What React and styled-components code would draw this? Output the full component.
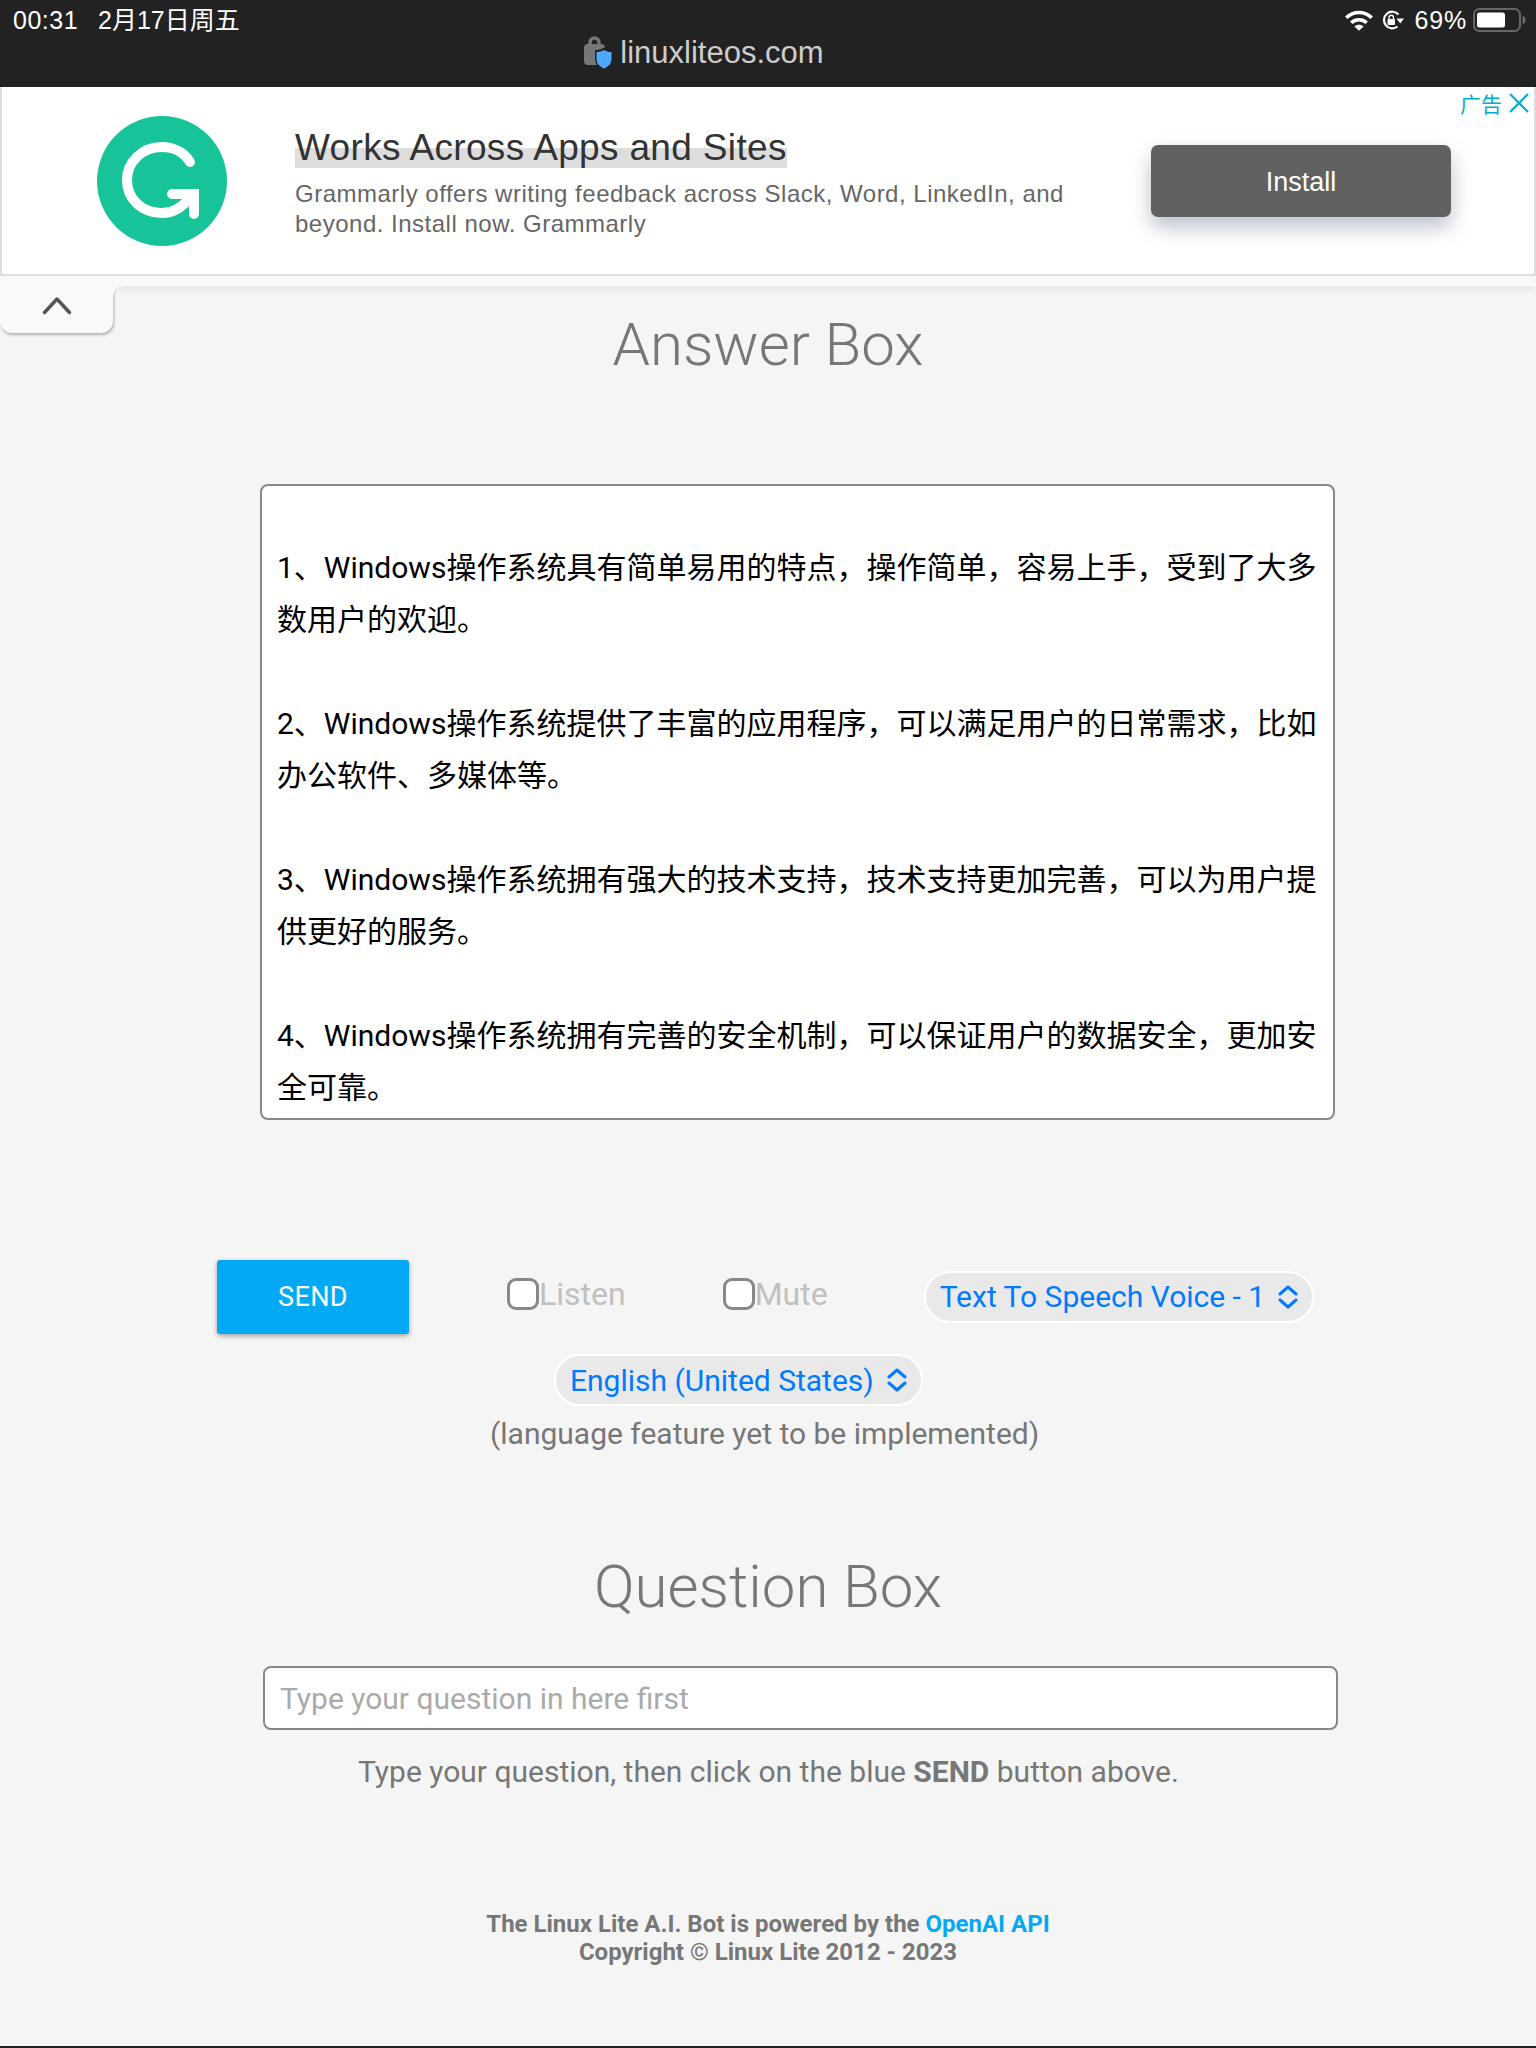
import React from "react";
import styled, { createGlobalStyle } from "styled-components";

const GlobalStyle = createGlobalStyle`
  html, body {
    margin: 0;
    padding: 0;
    background: #f5f5f5;
  }
  * {
    box-sizing: border-box;
  }
`;

const Page = styled.div`
  position: relative;
  width: 1536px;
  height: 2048px;
  overflow: hidden;
  display: flex;
  flex-direction: column;
  background: #f5f5f5;
  border-bottom: 2px solid #222;
  font-family: Roboto, "Noto Sans CJK SC", sans-serif;
`;

const BrowserBar = styled.div`
  height: 87px;
  flex: none;
  background: #222;
  color: #fff;
  font-family: "Liberation Sans", "Noto Sans CJK SC", sans-serif;
  display: flex;
  flex-direction: column;
`;

const StatusRow = styled.div`
  height: 40px;
  padding: 0 10px 0 13px;
  display: flex;
  align-items: center;
  justify-content: space-between;
  font-size: 25px;
  line-height: 30px;
`;

const Clock = styled.div`
  display: flex;
  align-items: center;
  gap: 20px;
`;

const Time = styled.span`
  letter-spacing: 0.5px;
`;

const StatusIcons = styled.div`
  display: flex;
  align-items: center;
  gap: 9px;
`;

const Percent = styled.span`
  letter-spacing: 0.8px;
  margin-left: 2px;
  margin-right: -3px;
`;

const AddressRow = styled.div`
  margin-top: -5px;
  display: flex;
  justify-content: center;
  align-items: center;
  gap: 7px;
  padding-right: 128px;
  font-size: 31px;
  color: #ccc;
  svg {
    flex: none;
  }
`;

const Ad = styled.div`
  position: relative;
  height: 189px;
  flex: none;
  background: #fff;
  border: 2px solid #ddd;
  border-top: none;
  padding-left: 95px;
  display: flex;
  align-items: center;
  font-family: "Liberation Sans", sans-serif;
`;

const AdCopy = styled.div`
  margin-left: 68px;
  width: 800px;
  margin-top: 3px;
`;

const AdTitle = styled.div`
  font-size: 37px;
  line-height: 44px;
  letter-spacing: 0.34px;
  color: #333;
  span {
    background: linear-gradient(to bottom, transparent 52%, #ddd 52%, #ddd 100%);
  }
`;

const AdText = styled.div`
  margin-top: 9px;
  font-size: 24px;
  line-height: 30px;
  letter-spacing: 0.5px;
  color: #666;
`;

const InstallButton = styled.div`
  width: 300px;
  height: 72px;
  margin-left: 56px;
  padding-top: 3px;
  border-radius: 7px;
  background: #616161;
  color: #fff;
  font-size: 27px;
  display: flex;
  align-items: center;
  justify-content: center;
  box-shadow: 0 10px 20px rgba(90, 100, 130, 0.4);
`;

const AdBadge = styled.div`
  position: absolute;
  top: 4px;
  right: 5px;
  display: flex;
  align-items: center;
  gap: 7px;
  font-family: "Noto Sans CJK SC", sans-serif;
  font-size: 21px;
  line-height: 24px;
  color: #00aecd;
`;

const Strip = styled.div`
  height: 10px;
  flex: none;
  background: #f9f9f9;
  box-shadow: 0 3px 10px rgba(0, 0, 0, 0.07);
`;

const CollapseTab = styled.div`
  position: absolute;
  top: 283px;
  left: 0;
  width: 113px;
  height: 50px;
  padding-bottom: 5px;
  background: #f9f9f9;
  border-radius: 0 0 12px 12px;
  box-shadow: 1px 2px 3px rgba(0, 0, 0, 0.28);
  clip-path: inset(3px -8px -8px 0);
  display: flex;
  align-items: center;
  justify-content: center;
`;

const TabCorner = styled.div`
  position: absolute;
  top: 286px;
  left: 113px;
  width: 9px;
  height: 9px;
  background: radial-gradient(circle at 100% 100%, transparent 8px, #f9f9f9 9px);
`;

const Heading = styled.h1`
  margin: ${(p) => p.$top}px 0 0;
  text-align: center;
  font-size: 60px;
  line-height: 72px;
  font-weight: 300;
  color: #777;
`;

const AnswerArea = styled.textarea`
  display: block;
  width: 1075px;
  height: 636px;
  margin: 103px 0 0 260px;
  padding: 4px 13px 0 15px;
  border: 2px solid #888;
  border-radius: 8px;
  background: #fff;
  color: #000;
  font-family: Roboto, "Noto Sans CJK SC", sans-serif;
  font-size: 30px;
  line-height: 52px;
  resize: none;
  overflow: hidden;
  outline: none;
`;

const Controls = styled.div`
  margin: 140px 0 0 217px;
  display: flex;
  align-items: center;
`;

const SendButton = styled.div`
  width: 192px;
  height: 74px;
  border-radius: 3px;
  background: #03a9f4;
  color: #fff;
  font-size: 27px;
  letter-spacing: 0.4px;
  display: flex;
  align-items: center;
  justify-content: center;
  box-shadow: 0 2px 5px rgba(0, 0, 0, 0.35);
`;

const CheckLabel = styled.label`
  display: flex;
  align-items: center;
  margin-left: ${(p) => p.$left}px;
  margin-top: -6px;
  font-size: 32px;
  font-weight: 400;
  color: #c0c0c0;
`;

const CheckBox = styled.input.attrs({ type: "checkbox" })`
  appearance: none;
  width: 32px;
  height: 32px;
  margin: 0;
  background: #fff;
  border: 3px solid #888;
  border-radius: 9px;
`;

const Pill = styled.div`
  height: 52px;
  padding: 0 14px;
  border: 2px solid #fff;
  border-radius: 26px;
  background: #e9e9e9;
  color: #007aff;
  font-size: 30px;
  display: inline-flex;
  align-items: center;
  gap: 13px;
  margin-left: ${(p) => p.$left || 0}px;
  margin-top: -1px;
`;

const LanguageRow = styled.div`
  margin-top: 21px;
  padding-left: 554px;
`;

const Hint = styled.p`
  margin: ${(p) => p.$top}px 0 0;
  padding-left: ${(p) => p.$left}px;
  font-size: 30px;
  line-height: 38px;
  font-weight: 400;
  color: #777;
  b {
    font-weight: 700;
  }
`;

const QuestionInput = styled.input`
  display: block;
  width: 1075px;
  height: 64px;
  margin: 43px 0 0 263px;
  padding: 0 15px;
  border: 2px solid #888;
  border-radius: 8px;
  background: #fff;
  font-family: Roboto, sans-serif;
  font-size: 30px;
  font-weight: 400;
  outline: none;
  &::placeholder {
    color: #aaa;
    opacity: 1;
  }
`;

const Credits = styled.footer`
  margin-top: 119px;
  text-align: center;
  font-size: 24px;
  line-height: 28px;
  font-weight: 700;
  color: #777;
  a {
    color: #03a9f4;
    text-decoration: none;
  }
`;

const answer = `
1\u3001Windows\u64CD\u4F5C\u7CFB\u7EDF\u5177\u6709\u7B80\u5355\u6613\u7528\u7684\u7279\u70B9\uFF0C\u64CD\u4F5C\u7B80\u5355\uFF0C\u5BB9\u6613\u4E0A\u624B\uFF0C\u53D7\u5230\u4E86\u5927\u591A\u6570\u7528\u6237\u7684\u6B22\u8FCE\u3002

2\u3001Windows\u64CD\u4F5C\u7CFB\u7EDF\u63D0\u4F9B\u4E86\u4E30\u5BCC\u7684\u5E94\u7528\u7A0B\u5E8F\uFF0C\u53EF\u4EE5\u6EE1\u8DB3\u7528\u6237\u7684\u65E5\u5E38\u9700\u6C42\uFF0C\u6BD4\u5982\u529E\u516C\u8F6F\u4EF6\u3001\u591A\u5A92\u4F53\u7B49\u3002

3\u3001Windows\u64CD\u4F5C\u7CFB\u7EDF\u62E5\u6709\u5F3A\u5927\u7684\u6280\u672F\u652F\u6301\uFF0C\u6280\u672F\u652F\u6301\u66F4\u52A0\u5B8C\u5584\uFF0C\u53EF\u4EE5\u4E3A\u7528\u6237\u63D0\u4F9B\u66F4\u597D\u7684\u670D\u52A1\u3002

4\u3001Windows\u64CD\u4F5C\u7CFB\u7EDF\u62E5\u6709\u5B8C\u5584\u7684\u5B89\u5168\u673A\u5236\uFF0C\u53EF\u4EE5\u4FDD\u8BC1\u7528\u6237\u7684\u6570\u636E\u5B89\u5168\uFF0C\u66F4\u52A0\u5B89\u5168\u53EF\u9760\u3002`;

const Chevrons = () => (
  <svg width="20" height="24" viewBox="0 0 20 24" fill="none" stroke="#007aff" strokeWidth="3" strokeLinecap="round" strokeLinejoin="round">
    <path d="M2 9l8-7 8 7" />
    <path d="M2 15l8 7 8-7" />
  </svg>
);

const Wifi = () => (
  <svg width="28" height="21" viewBox="0 0 28 21" fill="none" stroke="#fff" strokeWidth="3.6">
    <path d="M1.300 7.800c7-7 18.400-7 25.400 0" />
    <path d="M6.300 12.800c4.300-4 11.100-4 15.400 0" />
    <path d="M14 20.800l-4.600-4.400c2.500-2.100 6.700-2.100 9.200 0z" fill="#fff" stroke="none" />
  </svg>
);

const RotationLock = () => (
  <svg width="22" height="20" viewBox="0 0 22 20" fill="none">
    <path d="M15.500 16.500A8.300 8.300 0 1 1 16.500 4.500" stroke="#fff" strokeWidth="2.200" />
    <path d="M22 8.500h-7.500l3.800 5z" fill="#fff" />
    <rect x="5.500" y="9" width="7.500" height="6" rx="1" fill="#fff" />
    <path d="M7 9.500V7.500a2.250 2.250 0 0 1 4.500 0v2" stroke="#fff" strokeWidth="1.300" />
  </svg>
);

const Battery = () => (
  <svg width="53" height="24" viewBox="0 0 53 24" fill="none">
    <rect x="1" y="1" width="46" height="22" rx="5.500" stroke="#666" strokeWidth="2" />
    <rect x="4" y="4.500" width="28" height="15" rx="2.500" fill="#fff" />
    <path d="M49.500 7.500c2 1 3 2.500 3 4.500s-1 3.500-3 4.500z" fill="#666" />
  </svg>
);

const SecureLock = () => (
  <svg width="29" height="34" viewBox="0 0 29 34">
    <path d="M6 10V6.500a4.500 4.500 0 0 1 9 0V10" fill="none" stroke="#777" strokeWidth="3.500" />
    <rect x="0" y="8" width="21" height="21" rx="4" fill="#777" />
    <path d="M20 11.500c3 2 6 2.500 9 2.500v9c0 5-4 9-9 11-5-2-9-6-9-11v-9c3 0 6-.5 9-2.500z" fill="#222" />
    <path d="M20 14c2.500 1.500 5 2 7.500 2v7c0 4.500-3 7.500-7.500 9.500-4.500-2-7.500-5-7.500-9.500v-7c2.500 0 5-.5 7.500-2z" fill="#4da9ff" />
  </svg>
);

const GrammarlyLogo = () => (
  <svg width="130" height="130" viewBox="0 0 130 130" fill="none">
    <circle cx="65" cy="65" r="65" fill="#17c49a" />
    <path
      d="M93 46C87 36 76 31 65 31C45 31 30 46 30 64C30 83 45 97 65 97C75 97 84 93 97 78"
      stroke="#fff"
      strokeWidth="10"
      strokeLinecap="round"
    />
    <path d="M75 78H97V98" stroke="#fff" strokeWidth="10" strokeLinecap="round" strokeLinejoin="miter" />
  </svg>
);

const App = () => {
  return (
    <Page>
      <GlobalStyle />
      <BrowserBar>
        <StatusRow>
          <Clock>
            <Time>00:31</Time>
            <span>2月17日周五</span>
          </Clock>
          <StatusIcons>
            <Wifi />
            <RotationLock />
            <Percent>69%</Percent>
            <Battery />
          </StatusIcons>
        </StatusRow>
        <AddressRow>
          <SecureLock />
          <span>linuxliteos.com</span>
        </AddressRow>
      </BrowserBar>

      <Ad>
        <GrammarlyLogo />
        <AdCopy>
          <AdTitle>
            <span>Works Across Apps and Sites</span>
          </AdTitle>
          <AdText>
            Grammarly offers writing feedback across Slack, Word, LinkedIn, and beyond. Install now. Grammarly
          </AdText>
        </AdCopy>
        <InstallButton>Install</InstallButton>
        <AdBadge>
          <span>广告</span>
          <svg width="20" height="20" viewBox="0 0 20 20" stroke="#00aecd" strokeWidth="2.200">
            <path d="M1 1l18 18M19 1L1 19" />
          </svg>
        </AdBadge>
      </Ad>
      <Strip />
      <CollapseTab>
        <svg width="30" height="19" viewBox="0 0 30 19" fill="none" stroke="#555" strokeWidth="3.500" strokeLinecap="round" strokeLinejoin="round">
          <path d="M2.500 16.500L15 3l12.500 13.500" />
        </svg>
      </CollapseTab>
      <TabCorner />

      <Heading $top={23}>Answer Box</Heading>
      <AnswerArea readOnly defaultValue={answer} />

      <Controls>
        <SendButton>SEND</SendButton>
        <CheckLabel $left={98}>
          <CheckBox />
          Listen
        </CheckLabel>
        <CheckLabel $left={97}>
          <CheckBox />
          Mute
        </CheckLabel>
        <Pill $left={96}>
          Text To Speech Voice - 1
          <Chevrons />
        </Pill>
      </Controls>
      <LanguageRow>
        <Pill>
          English (United States)
          <Chevrons />
        </Pill>
      </LanguageRow>
      <Hint $top={9} $left={490}>(language feature yet to be implemented)</Hint>

      <Heading $top={98}>Question Box</Heading>
      <QuestionInput placeholder="Type your question in here first" />
      <Hint $top={23} $left={358}>
        Type your question, then click on the blue <b>SEND</b> button above.
      </Hint>

      <Credits>
        The Linux Lite A.I. Bot is powered by the <a href="#openai">OpenAI API</a>
        <br />
        Copyright © Linux Lite 2012 - 2023
      </Credits>
    </Page>
  );
};

export default App;
